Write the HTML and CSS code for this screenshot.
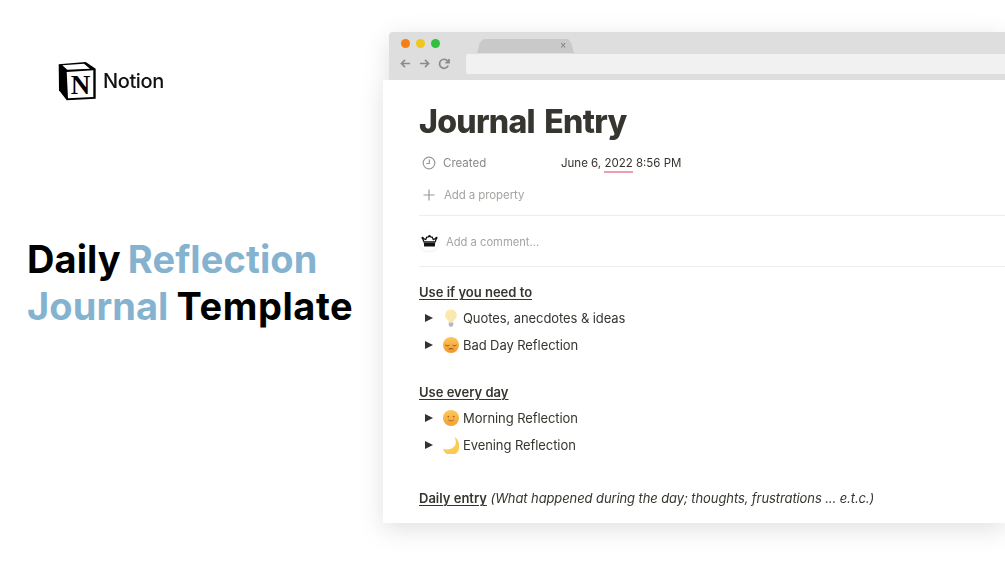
FILE: index.html
```html
<!DOCTYPE html>
<html lang="en">
<head>
<meta charset="utf-8">
<title>Daily Reflection Journal Template</title>
<link rel="stylesheet" href="styles.css">
</head>
<body>
<main class="slide">
  <section class="intro">
    <div class="brand">
      <svg class="brand-logo" viewBox="0 0 38 40" aria-hidden="true">
        <path d="M.7 3.300 27.700 1 37.700 7.700V37.700L8.700 39.300 1 29.300Z" fill="#000"/>
        <path d="M8.700 11 35.300 9.300V36L10 37.300Z" fill="#fff"/>
        <path d="M4.300 4.300 26 2.700 32 7.700 9.300 8.700Z" fill="#fff"/>
        <text class="brand-n" x="22.500" y="33.300" text-anchor="middle">N</text>
      </svg>
      <span class="brand-name">Notion</span>
    </div>
    <h1 class="headline"><span class="line-one">Daily <span class="accent">Reflection</span></span><br><span class="line-two"><span class="accent">Journal</span> <span class="wide">Template</span></span></h1>
  </section>

  <section class="browser">
    <div class="chrome">
      <div class="chrome-top">
        <div class="lights">
          <span class="light light-red"></span>
          <span class="light light-yellow"></span>
          <span class="light light-green"></span>
        </div>
        <div class="tab"><span class="tab-close">×</span></div>
      </div>
      <div class="chrome-nav">
        <svg class="nav-icon" viewBox="0 0 12 12" aria-hidden="true"><path d="M11 6H2M5.500 2 1.500 6l4 4"/></svg>
        <svg class="nav-icon" viewBox="0 0 12 12" aria-hidden="true"><path d="M1 6h9M6.500 2l4 4-4 4"/></svg>
        <svg class="nav-icon nav-reload" viewBox="0 0 12 12" aria-hidden="true"><path d="M10.200 7.500A4.500 4.500 0 1 1 9.600 3L11 4.500M11 1v3.600H7.400"/></svg>
        <div class="address"></div>
      </div>
    </div>
    <div class="page">
      <h2 class="title">Journal Entry</h2>
      <div class="prop">
        <svg class="prop-icon" viewBox="0 0 14 14" aria-hidden="true"><circle cx="7" cy="7" r="5.800"/><path d="M7.400 3.600V7.500H4.200"/></svg>
        <span class="prop-name">Created</span>
        <span class="prop-value">June 6, <span class="squiggle">2022</span> 8:56 PM</span>
      </div>
      <div class="prop prop-add">
        <svg class="prop-icon" viewBox="0 0 14 14" aria-hidden="true"><path d="M7 1.500v11M1.500 7h11"/></svg>
        <span class="prop-add-text">Add a property</span>
      </div>
      <div class="comment">
        <span class="avatar">
          <svg class="crown" viewBox="0 0 18 13" aria-hidden="true">
            <path d="M3 7.500 1.200 3.200 5 5 6 2.200h1.500L9 1l1.500 1.200H12L13 5l3.800-1.800L15 7.500Z" fill="none" stroke="#111" stroke-width="1.300" stroke-linejoin="round"/>
            <circle cx="1.500" cy="3" r="1.200" fill="#111"/>
            <circle cx="16.500" cy="3" r="1.200" fill="#111"/>
            <circle cx="9" cy="1.200" r="1.200" fill="#111"/>
            <path d="M2.800 8h12.400l-.4 4.500H3.200Z" fill="#111"/>
          </svg>
        </span>
        <span class="comment-text">Add a comment...</span>
      </div>

      <h3 class="heading heading-first">Use if you need to</h3>
      <div class="toggle">
        <span class="arrow"></span>
        <svg class="emoji" viewBox="0 0 16 18" aria-hidden="true"><path d="M8 .5a5.800 5.800 0 0 0-3.200 10.600c.7.600.9 1.400.9 2.200h4.600c0-.8.200-1.600.9-2.200A5.800 5.800 0 0 0 8 .5Z" fill="#fbe8ae"/><path d="M5.700 13.500h4.600v2.500L9 17.700H7L5.700 16Z" fill="#b5b8bd"/></svg>
        <span>Quotes, anecdotes &amp; ideas</span>
      </div>
      <div class="toggle">
        <span class="arrow"></span>
        <svg class="emoji" viewBox="0 0 16 16" aria-hidden="true"><defs><linearGradient id="faceA" x1="0" y1="0" x2="0" y2="1"><stop offset="0" stop-color="#fbc85a"/><stop offset="1" stop-color="#f2962f"/></linearGradient></defs><circle cx="8" cy="8" r="8" fill="url(#faceA)"/><path d="M2.800 8.200c1 .8 2.200.8 3.200.2M10 8.400c1 .6 2.200.6 3.200-.2M6 12c1.300-.6 2.700-.6 4 0" fill="none" stroke="#8a4b17" stroke-width="1" stroke-linecap="round"/></svg>
        <span>Bad Day Reflection</span>
      </div>

      <h3 class="heading heading-second">Use every day</h3>
      <div class="toggle">
        <span class="arrow"></span>
        <svg class="emoji" viewBox="0 0 16 16" aria-hidden="true"><defs><linearGradient id="faceB" x1="0" y1="0" x2="0" y2="1"><stop offset="0" stop-color="#fbc85a"/><stop offset="1" stop-color="#f3a035"/></linearGradient></defs><circle cx="8" cy="8" r="8" fill="url(#faceB)"/><circle cx="5.300" cy="6.600" r=".9" fill="#a8631f"/><circle cx="10.700" cy="6.600" r=".9" fill="#a8631f"/><path d="M5.300 10c1.700 1.300 3.700 1.300 5.400 0" fill="none" stroke="#a8631f" stroke-width=".9" stroke-linecap="round"/></svg>
        <span>Morning Reflection</span>
      </div>
      <div class="toggle">
        <span class="arrow"></span>
        <svg class="emoji" viewBox="0 0 16 16" aria-hidden="true"><path d="M11.500 0C15 2 16 5 16 8A8 8 0 0 1 0 12C6 13.500 12.500 11 12.800 6 13 4 12.500 2 11.500 0Z" fill="#f9cb55"/></svg>
        <span>Evening Reflection</span>
      </div>

      <p class="daily"><span class="heading-inline">Daily entry</span> <em>(What happened during the day; thoughts, frustrations ... e.t.c.)</em></p>
    </div>
  </section>
</main>
</body>
</html>
```

FILE: styles.css
```css
* { box-sizing: border-box; }

html, body {
  margin: 0;
  height: 100%;
  overflow: hidden;
  background: #fff;
}

body { font-family: Inter, "Noto Sans", sans-serif; }

.slide {
  display: flex;
  width: 1005px;
  height: 565px;
  overflow: hidden;
  padding-top: 32px;
}

.intro {
  flex: 0 0 383px;
  display: flex;
  flex-direction: column;
  padding-left: 27px;
}

.brand {
  display: flex;
  align-items: center;
  gap: 7px;
  margin: 29px 0 0 31px;
  height: 40px;
}

.brand-logo { width: 38px; height: 40px; flex: none; }
.brand-n { font: 700 27px "Liberation Serif", serif; fill: #000; }

.brand-name {
  font-size: 20px;
  font-weight: 500;
  letter-spacing: -0.4px;
  color: #111;
  filter: blur(.3px);
}

.headline {
  margin: 135px 0 0;
  font-size: 38px;
  line-height: 47px;
  font-weight: 700;
  letter-spacing: 0.08px;
  color: #000;
  white-space: nowrap;
}

.line-one { word-spacing: -2px; }
.line-two { word-spacing: -1px; }
.wide { letter-spacing: .55px; }
.accent { color: #85b3cf; }

.browser {
  flex: 1 1 auto;
  height: 491px;
  display: flex;
  flex-direction: column;
  filter: drop-shadow(0 6px 12px rgba(0,0,0,.12));
}

.chrome {
  margin-left: 6px;
  height: 48px;
  flex: none;
  background: #dedede;
  border-radius: 4px 0 0 0;
  display: flex;
  flex-direction: column;
}

.chrome-top {
  height: 21px;
  display: flex;
  align-items: flex-end;
  padding-left: 12px;
}

.lights {
  display: flex;
  gap: 6px;
  align-self: flex-start;
  margin-top: 7px;
}

.light { width: 9px; height: 9px; border-radius: 50%; }
.light-red { background: #f57f17; }
.light-yellow { background: #f1c71d; }
.light-green { background: #31c13e; }

.tab {
  margin-left: 37px;
  width: 97px;
  height: 14px;
  background: #c9c9c9;
  clip-path: polygon(0 100%, 3% 25%, 7% 0, 94% 0, 97% 25%, 100% 100%);
  display: flex;
  justify-content: flex-end;
  align-items: center;
  padding-right: 8px;
}

.tab-close { font: 10px/10px "Liberation Sans", sans-serif; color: #777; }

.chrome-nav {
  height: 27px;
  padding-top: 1px;
  display: flex;
  align-items: flex-start;
  padding-left: 11px;
}

.nav-icon {
  width: 11px;
  height: 11px;
  margin: 4px 8px 0 0;
  fill: none;
  stroke: #8b8b8b;
  stroke-width: 1.700;
  flex: none;
}

.nav-reload { width: 12px; height: 12px; margin-right: 16px; }

.address {
  flex: 1;
  height: 20px;
  background: #f1f1f1;
  border-radius: 2px 0 0 2px;
}

.page {
  flex: 1;
  background: #fff;
  padding: 0 0 0 36px;
  color: #37352f;
  filter: blur(.3px);
}

.title {
  margin: 22px 0 0;
  font-size: 32px;
  line-height: 40px;
  font-weight: 800;
  letter-spacing: -0.7px;
  word-spacing: 3px;
  color: #37352f;
}

.prop {
  display: flex;
  align-items: center;
  height: 20px;
  margin: 11px 0 0 3px;
  font-size: 11.500px;
}

.prop-icon {
  width: 14px;
  height: 14px;
  fill: none;
  stroke: #9b9a97;
  stroke-width: 1.200;
  flex: none;
}

.prop-name { margin-left: 7px; width: 118px; color: #8a8986; }
.prop-value { color: #37352f; }
.squiggle { border-bottom: 2px solid #ee9cb4; padding-bottom: 1px; }

.prop-add { margin-top: 12px; }
.prop-add-text { margin-left: 8px; color: #a5a4a1; letter-spacing: -0.1px; }

.comment {
  margin-top: 10px;
  height: 52px;
  border-top: 1px solid #ededed;
  border-bottom: 1px solid #ededed;
  display: flex;
  align-items: center;
  font-size: 11.200px;
}

.avatar {
  width: 20px;
  height: 20px;
  border-radius: 50%;
  box-shadow: 0 1px 3px rgba(0,0,0,.08);
  display: flex;
  align-items: center;
  justify-content: center;
  flex: none;
}

.crown { width: 17px; height: 12px; flex: none; }
.comment-text { margin: 2px 0 0 7px; color: #a5a4a1; }

.heading {
  margin: 0;
  font-size: 13px;
  line-height: 18px;
  font-weight: 600;
  text-decoration: underline;
  text-decoration-thickness: 1.300px;
  text-underline-offset: 2px;
}

.heading-first { margin-top: 16px; }
.heading-second { margin-top: 25px; }

.toggle {
  display: flex;
  align-items: center;
  height: 27px;
  font-size: 13px;
  letter-spacing: -0.08px;
  color: #37352f;
}

.heading + .toggle { margin-top: 3px; }

.arrow {
  width: 0;
  height: 0;
  margin-left: 6px;
  border-left: 8px solid #333;
  border-top: 4.500px solid transparent;
  border-bottom: 4.500px solid transparent;
  flex: none;
}

.emoji { width: 16px; height: 18px; margin: 0 4px 0 10px; flex: none; }

.daily {
  margin: 30px 0 0;
  font-size: 13px;
  line-height: 20px;
  letter-spacing: -0.1px;
  white-space: nowrap;
}

.heading-inline {
  font-weight: 600;
  letter-spacing: 0;
  text-decoration: underline;
  text-decoration-thickness: 1.300px;
  text-underline-offset: 2px;
}
```
